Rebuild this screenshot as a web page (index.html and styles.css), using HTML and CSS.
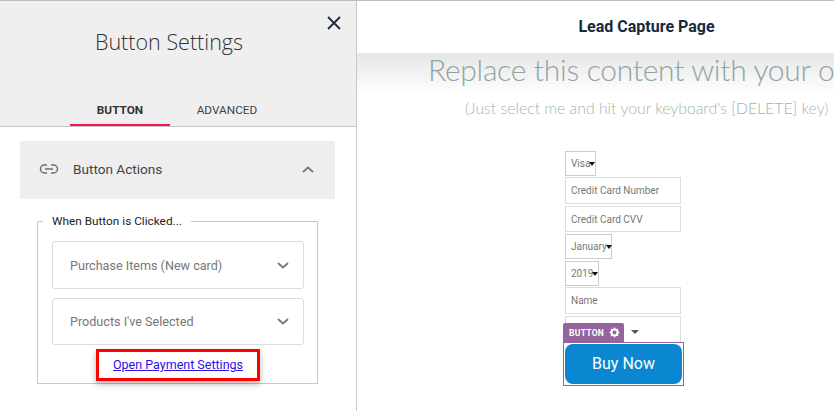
FILE: index.html
```html
<!DOCTYPE html>
<html lang="en">
<head>
    <meta charset="UTF-8">
    <meta name="viewport" content="width=device-width, initial-scale=1.0">
    <title>Button Settings</title>
    <link rel="stylesheet" href="styles.css">
</head>
<body>
    <div class="app">
        <div class="sidebar">
            <div class="sidebar-header">
                <svg class="close-btn" width="14" height="14" viewBox="0 0 14 14"><path d="M1 1 L13 13 M13 1 L1 13" stroke="#1c2b3a" stroke-width="1.8" fill="none"/></svg>
                <h2>Button Settings</h2>
                <div class="tabs">
                    <div class="tab tab--active">BUTTON</div>
                    <div class="tab">ADVANCED</div>
                </div>
            </div>
            <div class="sidebar-body">
                <div class="accordion">
                    <svg class="link-icon" width="20" height="10" viewBox="0 0 20 10"><path d="M8 1 H5.5 a4 4 0 0 0 0 8 H8 M12 1 H14.5 a4 4 0 0 1 0 8 H12 M6 5 H14" stroke="#6f6f6f" stroke-width="1.5" fill="none"/></svg>
                    <span class="accordion-title">Button Actions</span>
                    <svg class="chevron" width="12" height="7" viewBox="0 0 12 7"><path d="M1 6 L6 1.5 L11 6" stroke="#777" stroke-width="1.7" fill="none"/></svg>
                </div>
                <fieldset class="actions">
                    <legend>When Button is Clicked...</legend>
                    <div class="select-box">
                        <span>Purchase Items (New card)</span>
                        <svg width="12" height="7" viewBox="0 0 12 7"><path d="M1 1 L6 5.5 L11 1" stroke="#777" stroke-width="1.7" fill="none"/></svg>
                    </div>
                    <div class="select-box select-box--second">
                        <span>Products I've Selected</span>
                        <svg width="12" height="7" viewBox="0 0 12 7"><path d="M1 1 L6 5.5 L11 1" stroke="#777" stroke-width="1.7" fill="none"/></svg>
                    </div>
                    <div class="highlight-row">
                        <div class="highlight"><a href="#">Open Payment Settings</a></div>
                    </div>
                </fieldset>
            </div>
        </div>
        <div class="main">
            <div class="main-header">Lead Capture Page</div>
            <div class="canvas">
                <div class="headline">Replace this content with your own</div>
                <div class="subline">(Just select me and hit your keyboard's [DELETE] key)</div>
                <form class="order-form">
                    <div class="mini-select mini-select--visa">Visa<span class="caret"></span></div>
                    <input class="field" type="text" placeholder="Credit Card Number">
                    <input class="field field--cvv" type="text" placeholder="Credit Card CVV">
                    <div class="mini-select mini-select--month">January<span class="caret"></span></div>
                    <div class="mini-select mini-select--year">2019<span class="caret"></span></div>
                    <input class="field field--name" type="text" placeholder="Name">
                    <div class="button-wrap">
                        <input class="field field--hidden" type="text">
                        <div class="button-tag">
                            <span>BUTTON</span>
                            <svg width="11" height="11" viewBox="0 0 12 12"><circle cx="6" cy="6" r="3.2" fill="none" stroke="#fff" stroke-width="2"/><path d="M6 .8 V2.6 M6 9.4 V11.2 M.8 6 H2.6 M9.4 6 H11.2 M2.3 2.3 L3.6 3.6 M8.4 8.4 L9.7 9.7 M9.7 2.3 L8.4 3.6 M3.6 8.4 L2.3 9.7" stroke="#fff" stroke-width="2"/></svg>
                        </div>
                        <span class="tag-arrow"></span>
                        <div class="button-outline">
                            <div class="buy-btn">Buy Now</div>
                        </div>
                    </div>
                </form>
            </div>
        </div>
    </div>
</body>
</html>
```

FILE: styles.css
```css
html, body {
    margin: 0;
    height: 100%;
    overflow: hidden;
    background-color: #fff;
}
body {
    font-family: Roboto, sans-serif;
}
.app {
    display: flex;
    width: 834px;
    height: 411px;
    border-top: 1px solid #bdbdbd;
    box-sizing: border-box;
}
.sidebar {
    width: 357px;
    flex-shrink: 0;
    border-right: 1px solid #c9c9c9;
    box-sizing: border-box;
}
.sidebar-header {
    position: relative;
    height: 126px;
    background-color: #efefef;
    border-bottom: 1px solid #c8c8c8;
    box-sizing: border-box;
    padding-top: 26px;
}
.sidebar-header h2 {
    margin: 0;
    font-family: "Open Sans", sans-serif;
    font-weight: 300;
    font-size: 21.5px;
    line-height: 30px;
    color: #333;
    text-align: center;
    padding-right: 18px;
}
.close-btn {
    position: absolute;
    top: 15px;
    right: 15px;
}
.tabs {
    display: flex;
    margin: 38px 0 0 70px;
}
.tab {
    width: 100px;
    height: 31px;
    line-height: 30px;
    text-align: center;
    font-size: 11.8px;
    color: #444;
    box-sizing: border-box;
}
.tab--active {
    font-weight: 700;
    color: #333;
    border-bottom: 2px solid #f2184f;
}
.tab + .tab {
    width: 114px;
}
.sidebar-body {
    padding: 14px 21px 0 20px;
}
.accordion {
    display: flex;
    align-items: center;
    height: 58px;
    background-color: #eee;
    padding: 0 21px 2px 19px;
    box-sizing: border-box;
}
.accordion-title {
    flex-grow: 1;
    margin-left: 14px;
    font-size: 13.6px;
    color: #444;
}
.actions {
    margin: 15px 0 0 17px;
    width: 281px;
    height: 170px;
    padding: 0 13px 0 14px;
    border: 1px solid #c8c8c8;
    box-sizing: border-box;
}
.actions legend {
    margin-left: -9px;
    padding: 0 9px;
    font-size: 11.8px;
    color: #222;
}
.select-box {
    display: flex;
    align-items: center;
    justify-content: space-between;
    height: 48px;
    margin-top: 13px;
    padding: 0 14px 0 17px;
    border: 1px solid #dcdcdc;
    border-radius: 3px;
    box-sizing: border-box;
    font-size: 12.6px;
    color: #777;
}
.select-box--second {
    height: 47px;
    margin-top: 9px;
}
.highlight-row {
    display: flex;
    justify-content: center;
    margin-top: 4px;
}
.highlight {
    width: 164px;
    height: 32px;
    line-height: 26px;
    text-align: center;
    border: 3px solid #f00;
    box-sizing: border-box;
    background-color: #fff;
    font-size: 12.5px;
    box-shadow: 0 3px 6px rgba(0,0,0,0.3);
}
.highlight a {
    color: #2a0fe8;
}
.main {
    flex-grow: 1;
    min-width: 0;
    overflow: hidden;
}
.main-header {
    height: 52px;
    line-height: 51px;
    text-align: center;
    font-size: 16px;
    font-weight: 700;
    color: #16293d;
    padding-left: 102px;
}
.canvas {
    padding-left: 71px;
    background: linear-gradient(#e6e6e6, #fff 42px);
    height: 358px;
    white-space: nowrap;
}
.headline {
    font-family: Lato, sans-serif;
    font-weight: 300;
    font-size: 30px;
    line-height: 32px;
    letter-spacing: -0.3px;
    color: #8fa5a5;
}
.subline {
    font-family: Lato, sans-serif;
    font-weight: 300;
    font-size: 15.8px;
    line-height: 22px;
    margin: 12px 0 0 37px;
    color: #9fb3b3;
}
.order-form {
    display: flex;
    flex-direction: column;
    align-items: flex-start;
    margin: 32px 0 0 137px;
}
.mini-select {
    display: flex;
    align-items: center;
    height: 25px;
    padding-left: 5px;
    border: 1px solid #ccc;
    box-sizing: border-box;
    font-size: 10px;
    color: #777;
}
.mini-select--visa {
    width: 31px;
}
.mini-select--month {
    width: 47px;
}
.mini-select--year {
    width: 34px;
    margin-top: 2px;
}
.caret {
    width: 0;
    height: 0;
    margin-left: -1px;
    border-left: 3.5px solid transparent;
    border-right: 3.5px solid transparent;
    border-top: 4px solid #111;
}
.field {
    display: block;
    width: 116px;
    height: 27px;
    margin: 1px 0 0;
    padding: 0 5px;
    border: 1px solid #ddd;
    box-sizing: border-box;
    font-family: Roboto, sans-serif;
    font-size: 10px;
    outline: none;
}
.field::placeholder {
    color: #777;
    opacity: 1;
}
.field--cvv {
    height: 26px;
    margin: 2px 0;
}
.button-wrap {
    position: relative;
    margin-top: 2px;
}
.field--hidden {
    height: 27px;
    margin: 0;
}
.button-tag {
    position: absolute;
    left: -2px;
    top: 7px;
    width: 61px;
    height: 19px;
    display: flex;
    align-items: center;
    gap: 5px;
    padding-left: 6px;
    box-sizing: border-box;
    background-color: #93659c;
    border-radius: 2px 2px 0 0;
    color: #fff;
    font-size: 8.5px;
    font-weight: 700;
    letter-spacing: 0.3px;
}
.tag-arrow {
    position: absolute;
    left: 66px;
    top: 14px;
    width: 0;
    height: 0;
    border-left: 4px solid transparent;
    border-right: 4px solid transparent;
    border-top: 4px solid #555;
}
.button-outline {
    margin: -1px 0 0 -2px;
    width: 121px;
    height: 44px;
    padding: 1px;
    border: 1px solid #93659c;
    box-sizing: border-box;
}
.buy-btn {
    width: 117px;
    height: 40px;
    line-height: 40px;
    text-align: center;
    background-color: #0a87d0;
    border-radius: 8px;
    color: #fff;
    font-size: 16px;
}
```
